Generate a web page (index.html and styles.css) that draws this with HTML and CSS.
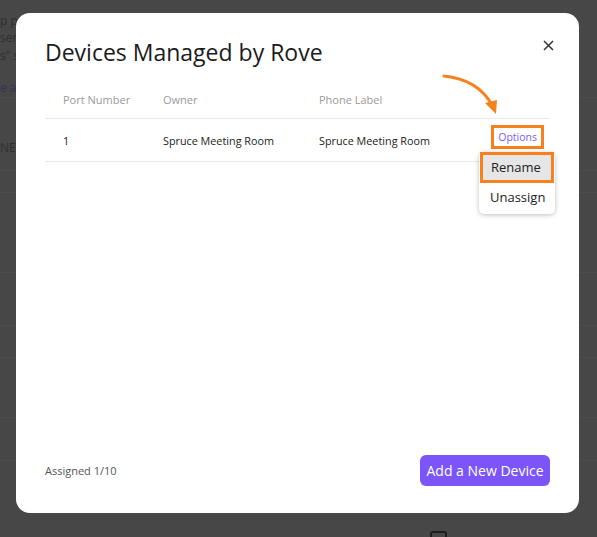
FILE: index.html
```html
<!DOCTYPE html>
<html lang="en">
<head>
<meta charset="utf-8">
<title>Devices Managed by Rove</title>
<link rel="stylesheet" href="styles.css">
</head>
<body>
<div class="page">
  <div class="bg-line t1">p p</div>
  <div class="bg-line t2">ser</div>
  <div class="bg-line t3">s" s</div>
  <div class="bg-line t4 link">e ab</div>
  <div class="bg-line t5">NES</div>
  <div class="rule r1"></div>
  <div class="rule r2"></div>
  <div class="rule r3"></div>
  <div class="rule r4"></div>
  <div class="rule r5"></div>
  <div class="rule r6"></div>
  <div class="rule r7"></div>
  <div class="rule r8"></div>
  <div class="checkbox"></div>
</div>

<div class="modal">
  <div class="modal-head">
    <h1 class="title">Devices Managed by Rove</h1>
    <button class="close" aria-label="Close">
      <svg width="11" height="11" viewBox="0 0 11 11"><path d="M1 1L10 10M10 1L1 10" stroke="#333" stroke-width="1.5" fill="none"/></svg>
    </button>
  </div>

  <div class="table">
    <div class="row head">
      <div class="cell c1">Port Number</div>
      <div class="cell c2">Owner</div>
      <div class="cell c3">Phone Label</div>
      <div class="cell c4"></div>
    </div>
    <div class="row body">
      <div class="cell c1">1</div>
      <div class="cell c2">Spruce Meeting Room</div>
      <div class="cell c3">Spruce Meeting Room</div>
      <div class="cell c4">
        <div class="options-wrap">
          <span class="options">Options</span>
          <div class="menu">
            <div class="menu-item active">Rename</div>
            <div class="menu-item">Unassign</div>
          </div>
        </div>
      </div>
    </div>
  </div>

  <div class="spacer"></div>

  <div class="footer">
    <span class="assigned">Assigned 1/10</span>
    <button class="add">Add a New Device</button>
  </div>

  <svg class="arrow" width="70" height="50" viewBox="0 0 70 50">
    <path d="M2 3 C 22 5, 40 14, 50 32" stroke="#f5821f" stroke-width="3" fill="none" stroke-linecap="round"/>
    <path d="M43 30 L55 27 L54 41 Z" fill="#f5821f"/>
  </svg>
</div>
</body>
</html>
```
FILE: styles.css
```css
* { box-sizing: border-box; }
html, body { margin: 0; padding: 0; }
body {
  width: 597px;
  height: 537px;
  overflow: hidden;
  background: #474747;
  font-family: "Open Sans", "Noto Sans", sans-serif;
  position: relative;
}
.page {
  position: relative;
  width: 597px;
  height: 537px;
}
.bg-line {
  position: absolute;
  left: 0;
  font-size: 12px;
  color: #2f2f2f;
  font-family: "Open Sans", sans-serif;
}
.bg-line.t1 { top: 12px; }
.bg-line.t2 { top: 29px; }
.bg-line.t3 { top: 47px; }
.bg-line.t4 { top: 79px; color: #36335a; }
.bg-line.t5 { top: 139px; }
.rule { position: absolute; left: 0; right: 0; height: 1px; background: #4c4c4c; }
.r1 { top: 97px; }
.r2 { top: 170px; }
.r3 { top: 192px; }
.r4 { top: 272px; }
.r5 { top: 325px; }
.r6 { top: 357px; }
.r7 { top: 417px; }
.r8 { top: 460px; }
.checkbox {
  position: absolute;
  left: 430px;
  top: 531px;
  width: 17px;
  height: 17px;
  border: 2px solid #1e1e1e;
  border-radius: 3px;
}

.modal {
  position: absolute;
  left: 16px;
  top: 13px;
  width: 563px;
  height: 500px;
  background: #fff;
  border-radius: 14px;
  padding: 23px 29px 27px;
  display: flex;
  flex-direction: column;
}
.modal-head {
  display: flex;
  justify-content: space-between;
  align-items: flex-start;
}
.title {
  margin: 0;
  font-size: 23px;
  line-height: 32px;
  font-weight: 400;
  color: #1b1b1b;
}
.close {
  border: 0;
  background: none;
  padding: 0;
  margin: 4px -4px 0 0;
  width: 11px;
  height: 11px;
  display: flex;
}

.table { margin-top: 12px; }
.row {
  display: grid;
  grid-template-columns: 100px 156px 1fr 60px;
  align-items: center;
  border-bottom: 1px solid #e9e9e9;
}
.row.head { height: 39px; font-size: 11px; color: #9a9a9a; }
.row.body { height: 43px; font-size: 10.8px; color: #222; }
.cell { padding-left: 18px; white-space: nowrap; }
.cell.c4 { padding-left: 0; display: flex; justify-content: flex-end; padding-right: 6px; }

.options-wrap { position: relative; }
.options {
  display: block;
  border: 3px solid #f5821f;
  padding: 1px 4px;
  height: 24px;
  line-height: 16px;
  color: #7a5cf0;
  font-size: 10.5px;
  margin-top: -7px;
}
.menu {
  position: absolute;
  top: 20px;
  right: -11px;
  width: 76px;
  background: #fff;
  border-radius: 5px;
  box-shadow: 0 1px 5px rgba(0,0,0,0.25);
  padding-bottom: 3px;
}
.menu-item {
  font-size: 13px;
  color: #222;
  padding: 0 0 0 11px;
  height: 28px;
  line-height: 28px;
}
.menu-item.active {
  background: #e6e6e6;
  border: 3px solid #f5821f;
  margin: 0 1px;
  height: 31px;
  line-height: 25px;
  padding-left: 8px;
}

.spacer { flex: 1; }
.footer {
  display: flex;
  justify-content: space-between;
  align-items: center;
}
.assigned { font-size: 11px; color: #555; }
.add {
  border: 0;
  background: #7b55f7;
  color: #fff;
  font-family: "Open Sans", "Noto Sans", sans-serif;
  font-size: 14px;
  height: 31px;
  width: 130px;
  border-radius: 6px;
  padding: 0;
}
.arrow {
  position: absolute;
  left: 426px;
  top: 60px;
}
```
